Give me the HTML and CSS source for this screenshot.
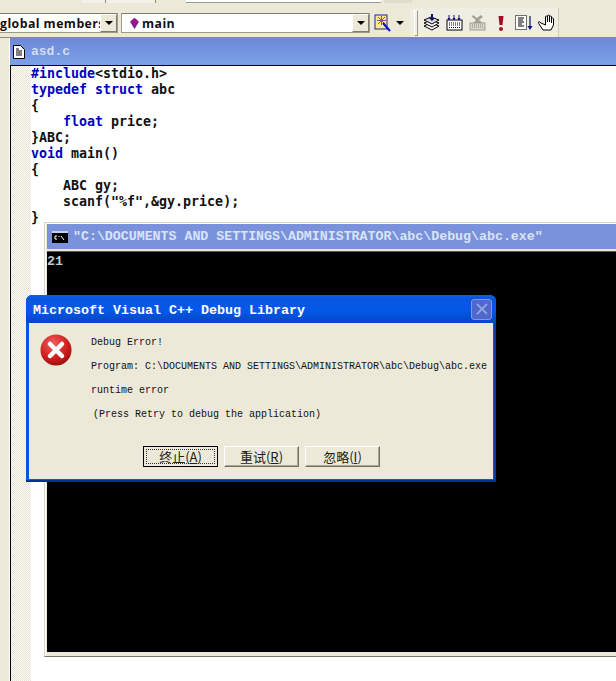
FILE: index.html
```html
<!DOCTYPE html>
<html lang="zh">
<head>
<meta charset="utf-8">
<title>asd.c</title>
<link rel="stylesheet" href="styles.css">
</head>
<body>
<div class="app">
  <div class="toolbars">
    <div class="top-strip">
      <span class="strip-btn"></span>
      <span class="strip-btn strip-wide"></span>
      <span class="strip-combo"></span>
      <span class="strip-end"></span>
    </div>
    <div class="bar-row">
      <div class="wizard">
        <div class="combo combo-class">
          <span class="combo-text">global members</span>
          <span class="combo-btn"><i class="caret"></i></span>
        </div>
        <div class="combo combo-func">
          <svg class="diamond" viewBox="0 0 10 12" width="9" height="11"><path d="M5 0 9.500 4 5 11.500.5 4Z" fill="#a0109c" stroke="#5a2a6a" stroke-width=".8"/></svg>
          <span class="combo-text">main</span>
          <span class="combo-btn"><i class="caret"></i></span>
        </div>
        <svg class="wand" viewBox="0 0 18 18" width="18" height="18"><rect x="1" y="1" width="12" height="14" fill="#f7ec8c" stroke="#20209a"/><path d="M4 3 11 10M11 3 4 10M7.500 2V11M3 6.500H12" stroke="#b040a0" stroke-width="1"/><path d="M9 9 16 17" stroke="#1010c0" stroke-width="2"/></svg>
        <i class="caret wand-caret"></i>
      </div>
      <div class="build">
        <span class="grip"></span>
        <svg class="tool" viewBox="0 0 18 18" width="18" height="18"><path d="M1 12 8 9l8 3-7 4Z" fill="#fff" stroke="#000"/><path d="M1 9 8 6l8 3-7 4Z" fill="#fff" stroke="#000"/><path d="M1 6 8 3l8 3-7 4Z" fill="#ddd" stroke="#000"/><path d="M8 0h2v4h2l-3 3-3-3h2Z" fill="#10107a"/></svg>
        <svg class="tool" viewBox="0 0 18 18" width="18" height="18"><rect x="1" y="6" width="15" height="10" fill="#fff" stroke="#000"/><path d="M3 9h11M3 11h11M3 13.500h11" stroke="#000" stroke-dasharray="1 1"/><path d="M3 1v5M8 1v5M13 1v5" stroke="#10107a"/><path d="M1.500 4h3L3 6.500ZM6.500 4h3L8 6.500ZM11.500 4h3L13 6.500Z" fill="#10107a"/></svg>
        <svg class="tool" viewBox="0 0 18 18" width="18" height="18"><rect x="1" y="9" width="15" height="7" fill="#d8d6c8" stroke="#a0a090"/><path d="M3 11h11M3 13h11" stroke="#8c8c80" stroke-dasharray="1 1"/><path d="M4 1l4 3 4-3 2 2-4 3 4 3H4l3-3-4-3Z" fill="#a0a094"/></svg>
        <svg class="tool" viewBox="0 0 18 18" width="18" height="18"><path d="M6.500 2h5l-1 9h-3Z" fill="#a01020"/><rect x="7" y="13" width="4" height="4" rx="2" fill="#a01020"/></svg>
        <svg class="tool" viewBox="0 0 18 18" width="18" height="18"><rect x=".5" y="1.500" width="11" height="14" fill="#fff" stroke="#707070"/><path d="M3 4h6M3 6h5M3 8h6M3 10h4M3 12h6" stroke="#000"/><path d="M15 2v12" stroke="#10107a" stroke-width="1.200"/><path d="M12.500 12h5L15 16Z" fill="#10107a"/></svg>
        <svg class="tool" viewBox="0 0 18 18" width="18" height="18"><path d="M3 9 1 7.500c-1 .5-.5 1.500 0 2.500l4 6h8l2.500-5V4.500c-1.500-1-2 0-2 0V9V2.500c-1.500-1-2 0-2 0V8V1.500c-1.500-1-2 0-2 0V8V2.500c-1.500-1-2 0-2 0V11Z" fill="#fff" stroke="#000" stroke-width="1"/></svg>
      </div>
      <div class="bar-fill"></div>
    </div>
  </div>

  <div class="workspace">
    <div class="rail"></div>
    <div class="document">
      <div class="doc-title">
        <svg class="doc-icon" viewBox="0 0 12 14" width="12" height="14"><path d="M.5.500h7l4 4v9H.5Z" fill="#fff" stroke="#000"/><path d="M3 6h6M3 8h6M3 10h6M3 4h3" stroke="#000"/></svg>
        <span>asd.c</span>
      </div>
      <div class="editor">
        <div class="margin"></div>
<pre class="code"><span class="kw">#include</span>&lt;stdio.h&gt;
<span class="kw">typedef</span> <span class="kw">struct</span> abc
{
    <span class="kw">float</span> price;
}ABC;
<span class="kw">void</span> main()
{
    ABC gy;
    scanf("%f",&amp;gy.price);
}</pre>
      </div>
    </div>
  </div>

  <section class="console">
    <header class="console-title">
      <svg class="console-icon" viewBox="0 0 16 12" width="16" height="12"><rect width="16" height="12" fill="#000"/><rect x="0" y="0" width="16" height="2" fill="#c4cff0"/><path d="M3 5H5M3 5v3h2M7 5v1M7 8v0M9 5l3 4" stroke="#fff" fill="none"/></svg>
      <span>"C:\DOCUMENTS AND SETTINGS\ADMINISTRATOR\abc\Debug\abc.exe"</span>
    </header>
    <div class="console-body">21</div>
  </section>

  <section class="dialog">
    <header class="dialog-title">
      <span class="dialog-name">Microsoft Visual C++ Debug Library</span>
      <span class="close"><svg viewBox="0 0 12 12" width="12" height="12"><path d="M1 1 11 11M11 1 1 11" stroke="#94a4e2" stroke-width="1.800"/></svg></span>
    </header>
    <div class="dialog-body">
      <div class="dialog-main">
        <svg class="error-icon" viewBox="0 0 32 32" width="32" height="32">
          <defs><radialGradient id="red" cx=".4" cy=".3" r=".8"><stop offset="0" stop-color="#f06060"/><stop offset=".6" stop-color="#d01c1c"/><stop offset="1" stop-color="#8a0c0c"/></radialGradient></defs>
          <circle cx="16" cy="16" r="15.500" fill="url(#red)"/>
          <path d="M10 10 22 22M22 10 10 22" stroke="#fff" stroke-width="4.500" stroke-linecap="round"/>
        </svg>
        <div class="message">
          <p>Debug Error!</p>
          <p>Program: C:\DOCUMENTS AND SETTINGS\ADMINISTRATOR\abc\Debug\abc.exe</p>
          <p>runtime error</p>
          <p class="hint">(Press Retry to debug the application)</p>
        </div>
      </div>
      <div class="actions">
        <button class="btn btn-default" type="button"><span class="focus">终止(<u>A</u>)</span></button>
        <button class="btn" type="button"><span class="focus">重试(<u>R</u>)</span></button>
        <button class="btn" type="button"><span class="focus">忽略(<u>I</u>)</span></button>
      </div>
    </div>
  </section>
</div>
</body>
</html>
```

FILE: styles.css
```css
* { box-sizing: border-box; }
html, body { margin: 0; padding: 0; }
body { width: 616px; height: 681px; overflow: hidden; background: #fff; }
.app { position: relative; width: 616px; height: 681px; overflow: hidden; }

.toolbars { height: 38px; background: #ece9d8; border-bottom: 1px solid #8c8a7c; display: flex; flex-direction: column; }
.top-strip { height: 4px; display: flex; overflow: hidden; padding-left: 82px; }
.strip-btn { width: 24px; height: 3px; background: #f4f2e8; border-right: 1px solid #8c8a7c; }
.strip-wide { width: 50px; margin-right: 30px; }
.strip-combo { width: 195px; height: 3px; background: #fff; border-bottom: 1px solid #999; }
.strip-end { width: 28px; height: 3px; background: #e0ddcc; margin-left: 3px; }
.bar-row { flex: 1; display: flex; height: 33px; }
.wizard { width: 410px; display: flex; align-items: center; padding-top: 5px; }
.combo { height: 20px; background: #fff; border: 1px solid #9c9a8c; border-top-color: #807e72; display: flex; align-items: center; font: 700 12.3px "Open Sans", sans-serif; color: #111; position: relative; overflow: hidden; }
.combo-class { width: 118px; border-left: 0; }
.combo-func { width: 249px; margin-left: 3px; padding-left: 8px; }
.combo-text { flex: 1; white-space: nowrap; overflow: hidden; letter-spacing: .45px; }
.combo-btn { width: 17px; height: 18px; background: #ece9d8; border: 1px solid; border-color: #fff #807e72 #807e72 #fff; display: flex; align-items: center; justify-content: center; flex: none; }
.caret { display: block; width: 0; height: 0; border: 4px solid transparent; border-top: 4px solid #000; border-bottom: 0; }
.diamond { margin-right: 3px; flex: none; }
.wand { margin-left: 4px; flex: none; }
.wand-caret { margin-left: 4px; }

.build { width: 149px; height: 29px; margin-top: 4px; background: #f0eee2; border-right: 1px solid #cfccba; display: flex; align-items: center; padding-left: 4px; gap: 5px; }
.grip { width: 4px; height: 26px; border: 1px solid; border-color: #fff #a09e90 #a09e90 #fff; flex: none; }
.tool { flex: none; }
.bar-fill { flex: 1; }

.workspace { height: 643px; display: flex; }
.rail { width: 10px; background: #ece9d8; border-right: 1px solid #fff; flex: none; }
.document { flex: 1; min-width: 0; display: flex; flex-direction: column; }
.doc-title { height: 27px; background: linear-gradient(#6e88d6, #7aa1e8); display: flex; align-items: center; padding-left: 3px; color: #d2def6; font: 700 13px/1 "Liberation Mono", monospace; }
.doc-icon { margin: 0 6px 0 0; flex: none; }
.editor { flex: 1; display: flex; border-top: 1px solid #000; border-left: 1px solid #000; background: #fff; }
.margin { width: 20px; background: repeating-conic-gradient(#e6e3d4 0 25%, #fdfdf8 0 50%) 0 0 / 2px 2px; flex: none; }
.code { margin: 0; padding: 0; font: 700 13.3px/16px "DejaVu Sans Mono", monospace; color: #111; }
.kw { color: #0000c0; }

.console { position: absolute; left: 44px; top: 222px; width: 600px; height: 435px; background: #ece9d8; border: 1px solid; border-color: #d8d5c4 #d8d5c4 #77776c #d8d5c4; padding: 1px 3px 4px 2px; display: flex; flex-direction: column; box-shadow: inset 1px 1px 0 #fff; }
.console-title { height: 25px; background: #7a92dc; color: #dbe3f7; font: 700 13.28px/1 "Liberation Mono", monospace; display: flex; align-items: center; padding: 1px 0 0 5px; white-space: nowrap; flex: none; }
.console-icon { margin: -1px 5px 0 0; flex: none; }
.console-body { flex: 1; margin-top: 2px; background: #000; border-top: 1px solid #555; color: #c8c8c8; font: 700 13.3px/16px "Liberation Mono", monospace; padding-top: 2px; }

.dialog { position: absolute; left: 26px; top: 295px; width: 470px; height: 187px; border-radius: 6px 6px 0 0; background: #0a55e0; padding: 0 3px 3px; box-shadow: inset 0 -2px 0 #02309c, inset -2px 0 0 #0438b0; display: flex; flex-direction: column; }
.dialog-title { height: 28px; margin: 0 -3px; padding: 0 4px 0 7px; border-radius: 6px 6px 0 0; background: linear-gradient(#0a5fe8 0, #0a55e0 15%, #0258ea 55%, #0546c4 100%); color: #fff; font: 700 13.33px/1 "Liberation Mono", monospace; display: flex; align-items: center; justify-content: space-between; white-space: nowrap; flex: none; }
.dialog-name { padding-top: 4px; }
.close { width: 21px; height: 21px; border: 1px solid #8496dc; border-radius: 3px; background: #4e68cc; display: flex; align-items: center; justify-content: center; }
.dialog-body { flex: 1; background: #ece9d8; font: 10px/24px "Liberation Mono", monospace; color: #111; display: flex; flex-direction: column; }
.dialog-main { display: flex; padding: 6px 0 0 11px; flex: none; }
.error-icon { flex: none; margin: 5px 18px 0 0; }
.message { padding: 2px 0 0 1px; white-space: nowrap; }
.message p { margin: 0; }
.hint { padding-left: 2px; }
.actions { display: flex; gap: 6px; padding: 19px 0 0 114px; }
.btn { width: 75px; height: 21px; padding: 0; background: #ece9d8; border: 1px solid; border-color: #fff #716f64 #716f64 #fff; font: 13px/1 "Noto Sans CJK SC", sans-serif; color: #222; display: flex; align-items: stretch; box-shadow: inset -1px -1px 0 #aca899; }
.focus { flex: 1; display: flex; align-items: center; justify-content: center; margin: 2px; }
.btn-default { border: 1px solid #000; box-shadow: none; }
.btn-default .focus { border: 1px dotted #333; }
```
